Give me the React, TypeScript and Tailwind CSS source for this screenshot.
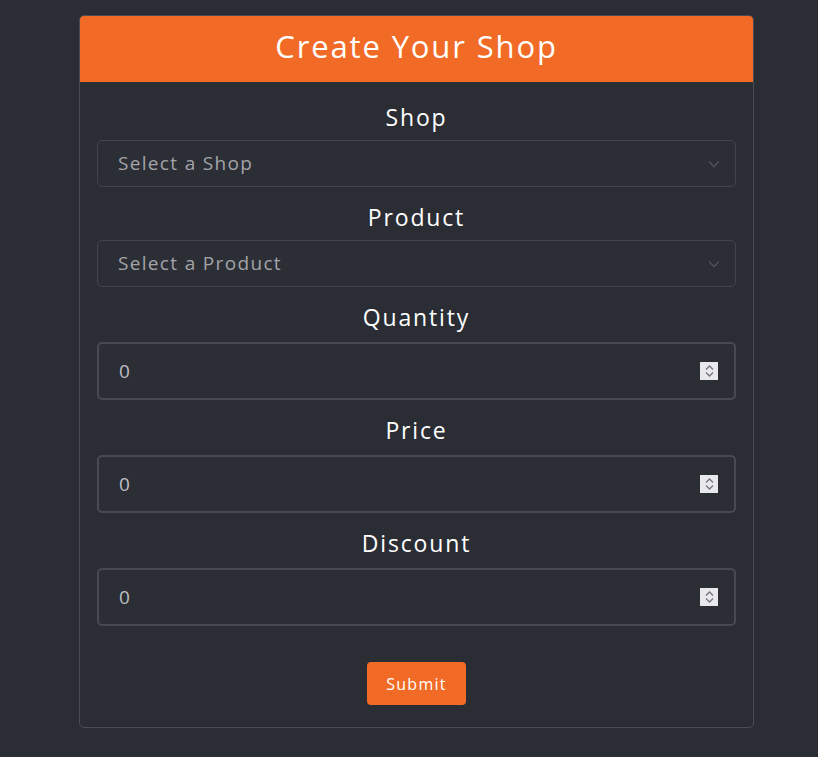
function Chevron() {
  return (
    <svg className="h-[8px] w-[12px]" viewBox="0 0 12 8" fill="none" stroke="#50535b" strokeWidth={1.3}>
      <path d="M1 1.5l5 5 5-5" />
    </svg>
  );
}

function SelectField({ label, placeholder }: { label: string; placeholder: string }) {
  return (
    <div className="flex flex-col">
      <label className="text-center text-[23px] leading-[30px] tracking-[0.08em] text-white">{label}</label>
      <div className="mt-[8px] flex h-[47px] items-center justify-between rounded-[5px] border border-[#42454d] bg-[#2c2e36] pl-[20px] pr-[15px]">
        <span className="text-[19px] tracking-[0.07em] text-[#a3a4a8]">{placeholder}</span>
        <Chevron />
      </div>
    </div>
  );
}

function NumberField({ label }: { label: string }) {
  return (
    <div className="flex flex-col">
      <label className="text-center text-[23px] leading-[30px] tracking-[0.08em] text-white">{label}</label>
      <div className="relative mt-[10px] flex h-[58px] items-center rounded-[5px] border-2 border-[#474a52] bg-[#2c2e36] pl-[20px]">
        <span className="text-[19px] text-[#bdbec2]">0</span>
        <div className="absolute right-[16px] top-1/2 flex h-[18px] w-[18px] -translate-y-1/2 flex-col items-center justify-center gap-[2px] bg-[#e9e9ed]">
          <svg className="h-[5px] w-[9px]" viewBox="0 0 9 5" fill="none" stroke="#75767c" strokeWidth={1.3}>
            <path d="M1 4.5l3.5-3.5 3.5 3.5" />
          </svg>
          <svg className="h-[5px] w-[9px]" viewBox="0 0 9 5" fill="none" stroke="#75767c" strokeWidth={1.3}>
            <path d="M1 0.5l3.5 3.5 3.5-3.5" />
          </svg>
        </div>
      </div>
    </div>
  );
}

export default function App() {
  return (
    <div className="min-h-[757px] bg-[#2b2d35] pt-[15px] font-['Open_Sans',sans-serif]">
      <div className="ml-[79px] w-[675px] overflow-hidden rounded-[5px] border border-[#494c54]">
        <div className="flex h-[66px] items-center justify-center bg-[#f26b26] pb-[5px]">
          <h1 className="text-[31px] font-normal tracking-[0.06em] text-white">Create Your Shop</h1>
        </div>
        <div className="flex flex-col gap-[15px] px-[17px] pb-[22px] pt-[20px]">
          <SelectField label="Shop" placeholder="Select a Shop" />
          <SelectField label="Product" placeholder="Select a Product" />
          <NumberField label="Quantity" />
          <NumberField label="Price" />
          <NumberField label="Discount" />
          <div className="mt-[21px] flex justify-center">
            <button className="h-[43px] w-[99px] rounded-[4px] bg-[#f26b26] text-[16px] tracking-[0.08em] text-white">Submit</button>
          </div>
        </div>
      </div>
    </div>
  );
}
